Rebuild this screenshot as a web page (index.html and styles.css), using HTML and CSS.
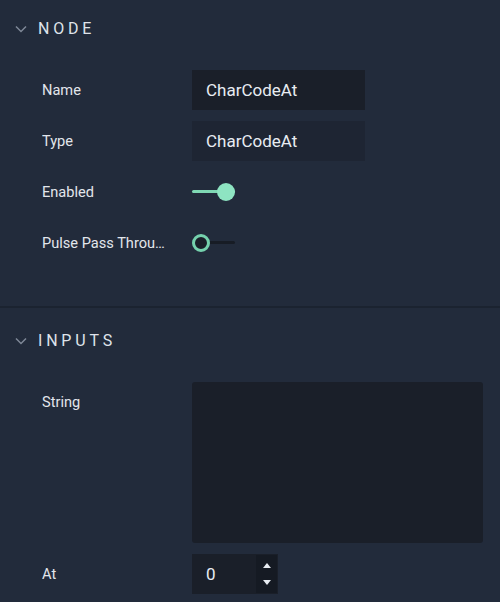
FILE: index.html
```html
<!DOCTYPE html>
<html>
<head>
<meta charset="utf-8">
<link rel="stylesheet" href="styles.css">
</head>
<body>
<div class="panel">
  <section class="section">
    <div class="section-header">
      <svg class="chevron" width="12" height="8" viewBox="0 0 12 8"><path d="M1 1.5 L6 6.5 L11 1.5" fill="none" stroke="#7f8897" stroke-width="1.5"/></svg>
      <span class="section-title">NODE</span>
    </div>
    <div class="rows">
      <div class="row">
        <div class="label">Name</div>
        <div class="field input">CharCodeAt</div>
      </div>
      <div class="row">
        <div class="label">Type</div>
        <div class="field input disabled">CharCodeAt</div>
      </div>
      <div class="row">
        <div class="label">Enabled</div>
        <div class="toggle on"><span class="track"></span><span class="knob"></span></div>
      </div>
      <div class="row">
        <div class="label">Pulse Pass Through</div>
        <div class="toggle off"><span class="track"></span><span class="knob"></span></div>
      </div>
    </div>
  </section>
  <div class="divider"></div>
  <section class="section second">
    <div class="section-header">
      <svg class="chevron" width="12" height="8" viewBox="0 0 12 8"><path d="M1 1.5 L6 6.5 L11 1.5" fill="none" stroke="#7f8897" stroke-width="1.5"/></svg>
      <span class="section-title">INPUTS</span>
    </div>
    <div class="rows">
      <div class="row top">
        <div class="label">String</div>
        <div class="textarea"></div>
      </div>
      <div class="row">
        <div class="label">At</div>
        <div class="number">
          <span class="num-value">0</span>
          <span class="spinner">
            <svg width="8" height="5" viewBox="0 0 8 5"><path d="M0 5 L4 0 L8 5 Z" fill="#e8ecf2"/></svg>
            <svg width="8" height="5" viewBox="0 0 8 5"><path d="M0 0 L4 5 L8 0 Z" fill="#e8ecf2"/></svg>
          </span>
        </div>
      </div>
    </div>
  </section>
</div>
</body>
</html>
```
FILE: styles.css
```css
html, body {
  margin: 0;
  padding: 0;
  background: #222b3b;
}
body {
  font-family: Roboto, "Liberation Sans", sans-serif;
  color: #e2e6ec;
  width: 500px;
  height: 602px;
  overflow: hidden;
}
.section {
  padding-top: 8px;
  padding-bottom: 43px;
}
.section.second {
  padding-top: 12px;
  padding-bottom: 0;
}
.section-header {
  height: 40px;
  display: flex;
  align-items: center;
  padding-left: 15px;
  margin-bottom: 22px;
}
.chevron {
  display: block;
  margin-right: 11px;
  margin-top: 1px;
}
.section-title {
  font-size: 16px;
  letter-spacing: 3.8px;
  color: #dfe3ea;
  font-weight: 400;
}
.rows {
  display: flex;
  flex-direction: column;
  gap: 11px;
}
.row {
  display: flex;
  align-items: center;
  min-height: 40px;
  padding-left: 42px;
}
.row.top {
  align-items: flex-start;
}
.row.top .label {
  line-height: 40px;
}
.label {
  width: 126px;
  margin-right: 24px;
  font-size: 14.6px;
  white-space: nowrap;
  overflow: hidden;
  text-overflow: ellipsis;
  flex: none;
  color: #e2e6ec;
}
.field.input {
  width: 173px;
  height: 40px;
  box-sizing: border-box;
  background: #1a1f29;
  padding-left: 14px;
  font-size: 17px;
  line-height: 40px;
  color: #e8ecf2;
}
.field.input.disabled {
  background: #1e2533;
}
.toggle {
  position: relative;
  width: 43px;
  height: 40px;
}
.toggle .track {
  position: absolute;
  left: 0;
  right: 0;
  top: 18px;
  height: 3px;
  border-radius: 2px;
}
.toggle .knob {
  position: absolute;
  top: 11px;
  width: 18px;
  height: 18px;
  border-radius: 50%;
  box-sizing: border-box;
}
.toggle.on .track {
  background: #7fd8b4;
}
.toggle.on .knob {
  right: 0;
  background: #8ee4c2;
}
.toggle.off .track {
  background: #171c25;
  left: 9px;
}
.toggle.off .knob {
  left: 0;
  background: #1a1f29;
  border: 3px solid #75d1ad;
}
.divider {
  height: 2px;
  background: #1b2330;
}
.textarea {
  width: 291px;
  height: 161px;
  background: #1a1f29;
  border-radius: 3px;
}
.number {
  display: flex;
  width: 86px;
  height: 40px;
  background: #1a1f29;
}
.num-value {
  flex: 1;
  padding-left: 14px;
  font-size: 17px;
  line-height: 40px;
  color: #e8ecf2;
}
.spinner {
  width: 21px;
  margin-right: 1px;
  margin-top: 1px;
  margin-bottom: 1px;
  background: #151a23;
  display: flex;
  flex-direction: column;
  align-items: center;
  justify-content: center;
  gap: 12px;
}
.spinner svg {
  display: block;
}
```
